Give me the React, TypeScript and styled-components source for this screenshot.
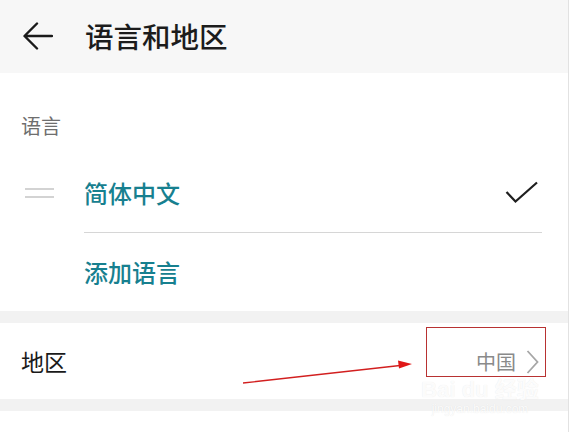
import React from 'react'
import styled, { createGlobalStyle } from 'styled-components'

const GlobalStyle = createGlobalStyle`
  html, body {
    margin: 0;
    padding: 0;
    background: #ffffff;
  }
  body {
    font-family: 'Noto Sans CJK SC', 'Noto Sans', sans-serif;
  }
`

const teal = '#17808f'
const band = '#f2f2f2'

const ArrowLeft = () => (
  <svg width="30" height="28" viewBox="0 0 30 28" fill="none">
    <path
      d="M29 14H2M14 1.5L1.5 14L14 26.5"
      stroke="#1a1a1a"
      strokeWidth="2.4"
      strokeLinecap="round"
      strokeLinejoin="round"
    />
  </svg>
)

const Check = () => (
  <svg width="34" height="24" viewBox="0 0 34 24" fill="none">
    <path d="M1.5 11L10.5 20.5L32 1.5" stroke="#1f1f1f" strokeWidth="2.2" />
  </svg>
)

const Chevron = () => (
  <svg width="13" height="24" viewBox="0 0 13 24" fill="none">
    <path d="M1.5 1L11.5 12L1.5 23" stroke="#a6a6a6" strokeWidth="1.8" />
  </svg>
)

export default function App() {
  return (
    <>
      <GlobalStyle />
      <Page>
        <Header>
          <BackButton>
            <ArrowLeft />
          </BackButton>
          <Title>语言和地区</Title>
        </Header>

        <Section>
          <SectionLabel>语言</SectionLabel>
          <LangRow>
            <Handle>
              <span />
              <span />
            </Handle>
            <RowBody $divider>
              <LinkText>简体中文</LinkText>
              <Check />
            </RowBody>
          </LangRow>
          <LangRow $short>
            <Handle />
            <RowBody>
              <LinkText>添加语言</LinkText>
            </RowBody>
          </LangRow>
        </Section>

        <Band />

        <RegionRow>
          <RegionLabel>地区</RegionLabel>
          <RegionValue>
            中国
            <Chevron />
          </RegionValue>
        </RegionRow>

        <Band />

        <Annotation>
          <svg width="569" height="432" viewBox="0 0 569 432">
            <line x1="243" y1="383" x2="400" y2="365.5" stroke="#d21f1f" strokeWidth="1.3" />
            <path d="M412 364 L398 360.5 L399 368.5 Z" fill="#e01818" />
          </svg>
          <RedBox />
          <Watermark>
            <strong>Bai du 经验</strong>
            <small>jingyan.baidu.com</small>
          </Watermark>
        </Annotation>
      </Page>
    </>
  )
}

const Page = styled.div`
  position: relative;
  width: 568px;
  height: 432px;
  overflow: hidden;
  background: #ffffff;
  border-right: 1px solid #e2e2e2;
`

const Header = styled.header`
  height: 73px;
  display: flex;
  align-items: center;
  padding-left: 23px;
  background: #f7f7f7;
  box-sizing: border-box;
`

const BackButton = styled.div`
  display: flex;
  align-items: center;
  width: 62px;
  margin-top: -2px;
`

const Title = styled.h1`
  margin: 0;
  font-size: 28.5px;
  font-weight: 500;
  color: #1c1c1c;
  line-height: 1;
`

const Section = styled.section`
  background: #ffffff;
`

const SectionLabel = styled.div`
  height: 80px;
  box-sizing: border-box;
  padding: 40px 0 0 21px;
  font-size: 20px;
  line-height: 26px;
  color: #6e6e6e;
`

const LangRow = styled.div<{ $short?: boolean }>`
  display: flex;
  height: ${(p) => (p.$short ? '78px' : '80px')};
`

const Handle = styled.div`
  width: 84px;
  flex-shrink: 0;
  display: flex;
  flex-direction: column;
  justify-content: center;
  gap: 6px;
  padding-left: 25px;
  box-sizing: border-box;
  > span {
    display: block;
    width: 29px;
    height: 2px;
    background: #d3d3d3;
  }
`

const RowBody = styled.div<{ $divider?: boolean }>`
  flex: 1;
  margin-right: 26px;
  display: flex;
  align-items: center;
  justify-content: space-between;
  padding-right: 3px;
  border-bottom: ${(p) => (p.$divider ? '1px solid #d6d6d6' : 'none')};
`

const LinkText = styled.span`
  font-size: 24px;
  font-weight: 500;
  color: ${teal};
  line-height: 1;
`

const Band = styled.div`
  height: 12px;
  background: ${band};
`

const RegionRow = styled.div`
  height: 76px;
  display: flex;
  align-items: center;
  justify-content: space-between;
  padding: 0 29px 0 21px;
`

const RegionLabel = styled.span`
  font-size: 23px;
  color: #1a1a1a;
  line-height: 1;
`

const RegionValue = styled.span`
  display: flex;
  align-items: center;
  gap: 10px;
  font-size: 20px;
  color: #8a8a8a;
  line-height: 1;
  margin-top: 2px;
`

const Annotation = styled.div`
  position: absolute;
  inset: 0;
  pointer-events: none;
  > svg {
    position: absolute;
    left: 0;
    top: 0;
  }
`

const RedBox = styled.div`
  position: absolute;
  left: 426px;
  top: 327px;
  width: 120px;
  height: 50px;
  box-sizing: border-box;
  border: 1px solid #b83232;
`

const Watermark = styled.div`
  position: absolute;
  left: 400px;
  top: 378px;
  width: 160px;
  display: flex;
  flex-direction: column;
  align-items: center;
  color: rgba(255, 255, 255, 0.9);
  text-shadow: 0 0 1px rgba(0, 0, 0, 0.1);
  font-family: 'Liberation Sans', 'Noto Sans CJK SC', sans-serif;
  > strong {
    font-size: 22px;
    font-weight: 700;
    line-height: 24px;
  }
  > small {
    font-size: 12px;
    line-height: 14px;
  }
`
